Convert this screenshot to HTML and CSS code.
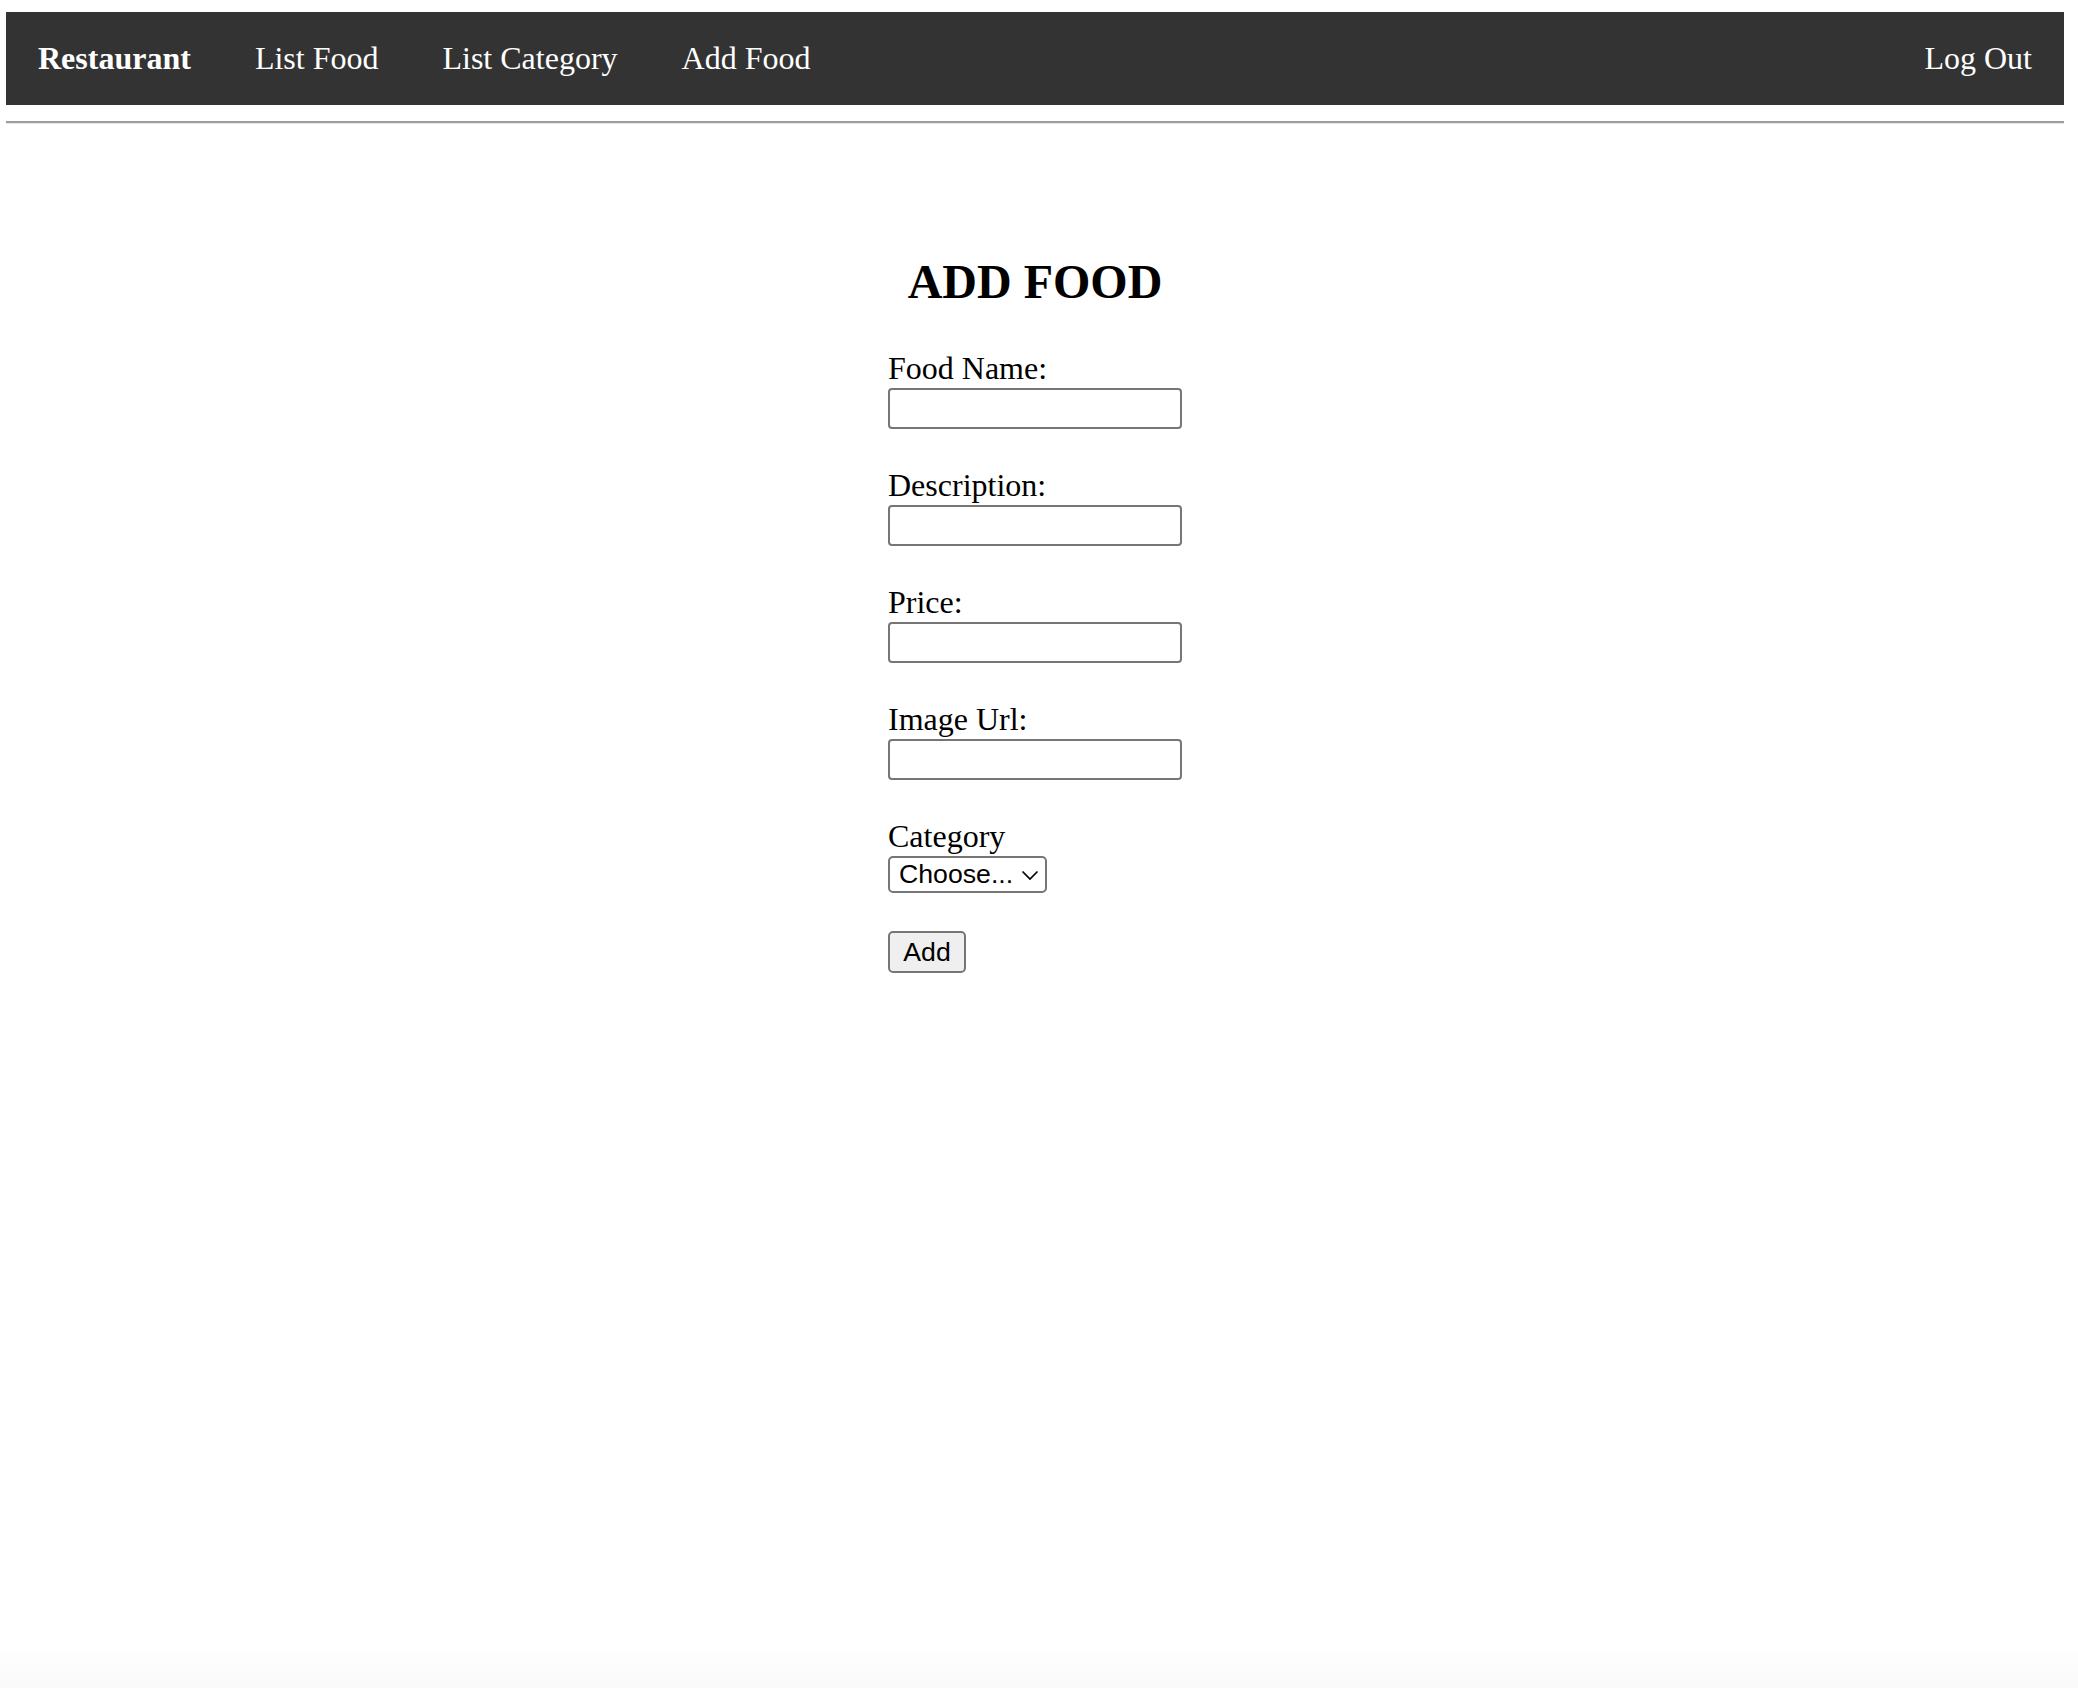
FILE: index.html
```html
<!DOCTYPE html>
<html lang="en">
<head>
<meta charset="utf-8">
<title>Add Food</title>
<link rel="stylesheet" href="styles.css">
</head>
<body>
<nav class="topnav">
  <a class="nav-link brand" href="#">Restaurant</a>
  <a class="nav-link" href="#">List Food</a>
  <a class="nav-link" href="#">List Category</a>
  <a class="nav-link" href="#">Add Food</a>
  <a class="nav-link logout" href="#">Log Out</a>
</nav>
<div class="rule"></div>
<main class="content">
  <form class="food-form">
    <h2 class="form-title">ADD FOOD</h2>
    <div class="field">
      <label class="field-label" for="name">Food Name:</label>
      <input class="text-input" id="name" type="text">
    </div>
    <div class="field">
      <label class="field-label" for="desc">Description:</label>
      <input class="text-input" id="desc" type="text">
    </div>
    <div class="field">
      <label class="field-label" for="price">Price:</label>
      <input class="text-input" id="price" type="text">
    </div>
    <div class="field">
      <label class="field-label" for="img">Image Url:</label>
      <input class="text-input" id="img" type="text">
    </div>
    <div class="field">
      <label class="field-label" for="cat">Category</label>
      <div class="select-wrap">
        <select class="select-input" id="cat">
          <option>Choose...</option>
        </select>
        <svg class="chevron" width="18" height="11" viewBox="0 0 18 11"><path d="M1.5 1.5 L9 9 L16.5 1.5" fill="none" stroke="#000" stroke-width="1.7"/></svg>
      </div>
    </div>
    <button class="add-btn" type="button">Add</button>
  </form>
</main>
<div class="bottom-fade"></div>
</body>
</html>
```

FILE: styles.css
```css
html, body {
  height: 100%;
}
body {
  margin: 12px 14px 0 6px;
  font-family: "Liberation Serif", "Times New Roman", serif;
  background: #ffffff;
  color: #000;
}
.topnav {
  display: flex;
  align-items: center;
  height: 93px;
  background: #333333;
}
.nav-link {
  color: #ffffff;
  text-decoration: none;
  font-size: 32px;
  line-height: 93px;
  height: 93px;
  padding: 0 32px;
  display: block;
}
.brand {
  font-weight: bold;
}
.logout {
  margin-left: auto;
}
.rule {
  margin-top: 16px;
  border-top: 2px solid #9e9e9e;
  border-bottom: 1px solid #e6e6e6;
}
.content {
  display: flex;
  justify-content: center;
  padding-top: 130px;
}
.food-form {
  width: 294px;
  display: flex;
  flex-direction: column;
  align-items: flex-start;
}
.form-title {
  align-self: center;
  white-space: nowrap;
  margin: 0 0 38px 0;
  font-size: 48px;
  line-height: 56px;
  font-weight: bold;
}
.field {
  display: flex;
  flex-direction: column;
  align-items: flex-start;
  margin-bottom: 36px;
}
.field-label {
  font-size: 32px;
  line-height: 40px;
}
.text-input {
  box-sizing: border-box;
  width: 294px;
  height: 41px;
  margin: 0;
  border: 2px solid #767676;
  border-radius: 4px;
  background: #fff;
  padding: 2px 4px;
  font-family: "Liberation Sans", Arial, sans-serif;
  font-size: 26px;
}
.select-wrap {
  position: relative;
  width: 159px;
  height: 37px;
}
.select-input {
  -webkit-appearance: none;
  appearance: none;
  box-sizing: border-box;
  width: 159px;
  height: 37px;
  margin: 0;
  border: 2px solid #767676;
  border-radius: 5px;
  background: #fff;
  color: #000;
  padding: 0 0 0 9px;
  font-family: "Liberation Sans", Arial, sans-serif;
  font-size: 26.67px;
  line-height: 33px;
}
.chevron {
  position: absolute;
  right: 8px;
  top: 14px;
  pointer-events: none;
}
.add-btn {
  box-sizing: border-box;
  width: 78px;
  height: 42px;
  margin: 2px 0 0 0;
  padding: 0;
  border: 2px solid #767676;
  border-radius: 5px;
  background: #efefef;
  color: #000;
  font-family: "Liberation Sans", Arial, sans-serif;
  font-size: 26.67px;
}
.bottom-fade {
  position: fixed;
  left: 0;
  right: 0;
  bottom: 0;
  height: 40px;
  background: linear-gradient(to bottom, rgba(245,245,245,0), rgba(245,245,245,0.6));
  pointer-events: none;
}
```
